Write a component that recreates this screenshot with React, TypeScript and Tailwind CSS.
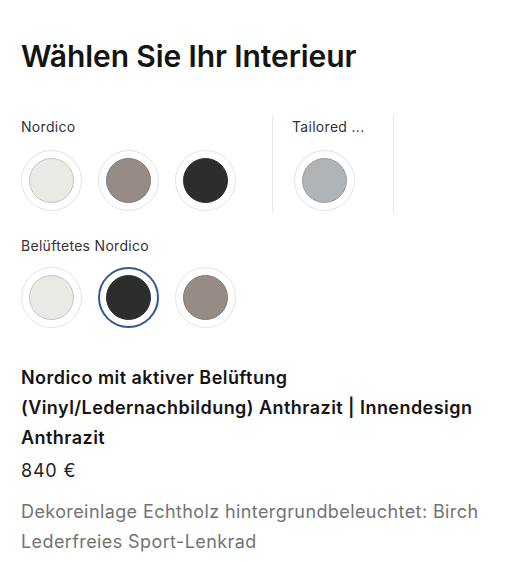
import React from "react";

type Swatch = { id: string; fill: string; edge: string };

const groups: { label: string; swatches: Swatch[] }[] = [
  {
    label: "Nordico",
    swatches: [
      { id: "n-white", fill: "bg-[#e9e9e6]", edge: "border-[#c4c4c0]" },
      { id: "n-taupe", fill: "bg-[#968b85]", edge: "border-[#827873]" },
      { id: "n-dark", fill: "bg-[#2c2d2f]", edge: "border-[#2c2d2f]" },
    ],
  },
  {
    label: "Tailored ...",
    swatches: [{ id: "t-grey", fill: "bg-[#b1b4b7]", edge: "border-[#9a9da0]" }],
  },
];

const vented: Swatch[] = [
  { id: "v-white", fill: "bg-[#e9e9e6]", edge: "border-[#c4c4c0]" },
  { id: "v-dark", fill: "bg-[#2c2d2f]", edge: "border-[#2c2d2f]" },
  { id: "v-taupe", fill: "bg-[#968b85]", edge: "border-[#827873]" },
];

function Chip({ swatch, selected }: { swatch: Swatch; selected?: boolean }) {
  return (
    <button
      className={`w-[61px] h-[61px] rounded-full flex items-center justify-center bg-white ${
        selected ? "border-2 border-[#2d5b92]" : "border border-[#e4e4e4]"
      }`}
    >
      <span className={`w-[45px] h-[45px] rounded-full border ${swatch.fill} ${swatch.edge}`} />
    </button>
  );
}

export default function App() {
  return (
    <div className="w-[512px] h-[562px] bg-white px-[21px] pt-[38px] font-['Inter','Noto_Sans',sans-serif] text-[#141414]">
      <h1 className="text-[30px] leading-[36px] font-semibold tracking-[-0.1px]">Wählen Sie Ihr Interieur</h1>

      <div className="mt-[41px] flex">
        {groups.map((g, i) => (
          <div
            key={g.label}
            className={`flex flex-col border-r border-[#e8e8e8] pb-[2px] ${i === 0 ? "pr-[36px]" : "pl-[21px] pr-[29px]"}`}
          >
            <div className={`text-[14px] leading-[24px] tracking-[0.3px] text-[#333] mb-[11px] ${i === 0 ? "" : "-ml-[2px]"}`}>
              {g.label}
            </div>
            <div className="flex gap-[16px]">
              {g.swatches.map((s) => (
                <Chip key={s.id} swatch={s} />
              ))}
            </div>
          </div>
        ))}
      </div>

      <div className="mt-[21px]">
        <div className="text-[14px] leading-[24px] tracking-[0.3px] text-[#333] mb-[9px]">Belüftetes Nordico</div>
        <div className="flex gap-[16px]">
          {vented.map((s) => (
            <Chip key={s.id} swatch={s} selected={s.id === "v-dark"} />
          ))}
        </div>
      </div>

      <div className="mt-[35px] text-[18px] leading-[30px] font-semibold tracking-[0.45px]">
        Nordico mit aktiver Belüftung
        <br />
        (Vinyl/Ledernachbildung) Anthrazit | Innendesign Anthrazit
      </div>
      <div className="mt-[3px] text-[18px] leading-[30px] tracking-[0.8px] text-[#222]">840 €</div>
      <div className="mt-[11px] text-[18px] leading-[30px] tracking-[0.4px] text-[#737373]">
        <div>Dekoreinlage Echtholz hintergrundbeleuchtet: Birch</div>
        <div>Lederfreies Sport-Lenkrad</div>
      </div>
    </div>
  );
}
